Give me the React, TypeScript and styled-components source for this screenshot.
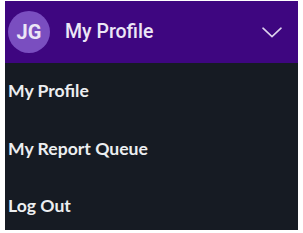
import { FC } from 'react';
import styled, { createGlobalStyle } from 'styled-components';

const GlobalStyle = createGlobalStyle`
	html, body {
		margin: 0;
		padding: 0;
		background: #ffffff;
	}
`;

const menuItems = ['My Profile', 'My Report Queue', 'Log Out'];

const App: FC = () => {
	return (
		<>
			<GlobalStyle />
			<Page>
				<Panel>
					<Header>
						<Avatar>JG</Avatar>
						<HeaderTitle>My Profile</HeaderTitle>
						<Chevron width="20" height="11" viewBox="0 0 20 11" fill="none">
							<path d="M1 1.2 L10 9.6 L19 1.2" stroke="#ddd3ec" strokeWidth="1.6" strokeLinecap="round" strokeLinejoin="round" />
						</Chevron>
					</Header>
					<Menu>
						{menuItems.map((label) => (
							<MenuItem key={label}>{label}</MenuItem>
						))}
					</Menu>
				</Panel>
			</Page>
		</>
	);
};

const Page = styled.div`
	padding: 1px 5px 3px 5px;
`;

const Panel = styled.div`
	width: 293px;
	height: 229px;
	background-color: #161b23;
	display: flex;
	flex-direction: column;
	overflow: hidden;
`;

const Header = styled.div`
	height: 62px;
	flex-shrink: 0;
	background-color: #3e0680;
	display: flex;
	align-items: center;
	padding: 0 16px 0 3px;
	box-sizing: border-box;
`;

const Avatar = styled.div`
	width: 42px;
	height: 42px;
	border-radius: 50%;
	background-color: #7a4ec0;
	color: #ece6f6;
	display: flex;
	align-items: center;
	justify-content: center;
	font-family: Roboto, 'Liberation Sans', Arial, sans-serif;
	font-weight: 700;
	font-size: 20px;
`;

const HeaderTitle = styled.div`
	margin-left: 15px;
	flex: 1;
	color: #ece6f6;
	font-family: Roboto, 'Liberation Sans', Arial, sans-serif;
	font-weight: 500;
	font-size: 19.5px;
	padding-bottom: 1px;
`;

const Chevron = styled.svg`
	display: block;
	margin-top: 1px;
`;

const Menu = styled.div`
	display: flex;
	flex-direction: column;
	padding-left: 3px;
`;

const MenuItem = styled.div`
	height: 57.5px;
	display: flex;
	align-items: center;
	color: #eceef0;
	font-family: Lato, 'Noto Sans', sans-serif;
	font-weight: 700;
	font-size: 17.6px;
	padding-bottom: 2px;
	box-sizing: border-box;
`;

export default App;
